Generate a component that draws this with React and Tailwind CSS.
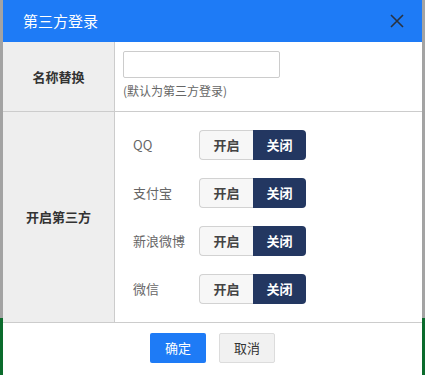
import React, { useState } from "react";

const platforms = ["QQ", "支付宝", "新浪微博", "微信"];

const Strip = () => (
  <div className="w-[3px] flex flex-col">
    <div className="h-[318px] bg-[#a3a3a3]" />
    <div className="flex-1 bg-[#0b6b2c]" />
  </div>
);

const Toggle = ({ on, onChange }) => (
  <div className="flex h-[30px] w-[107px] text-[13px] font-bold">
    <button
      onClick={() => onChange(true)}
      className={
        on
          ? "w-[54px] rounded-l-[4px] bg-[#233761] text-white"
          : "w-[54px] rounded-l-[4px] border border-r-0 border-[#d2d2d2] bg-[#f7f7f7] text-[#444]"
      }
    >
      开启
    </button>
    <button
      onClick={() => onChange(false)}
      className={
        on
          ? "w-[53px] rounded-r-[4px] border border-l-0 border-[#d2d2d2] bg-[#f7f7f7] text-[#444]"
          : "w-[53px] rounded-r-[4px] bg-[#233761] text-white"
      }
    >
      关闭
    </button>
  </div>
);

export default function App() {
  const [name, setName] = useState("");
  const [states, setStates] = useState({ QQ: false, 支付宝: false, 新浪微博: false, 微信: false });

  return (
    <div className="flex h-[375px] w-[425px] overflow-hidden font-['Noto_Sans_CJK_SC','Noto_Sans',sans-serif]">
      <Strip />
      <div className="w-[419px] flex flex-col bg-white">
        <div className="h-[42px] bg-[#1e7bf6] flex items-center justify-between pl-[20px] pr-[18px]">
          <span className="text-[15px] text-white">第三方登录</span>
          <svg width="14" height="14" viewBox="0 0 14 14" className="text-[#2a3240]">
            <path d="M1 1L13 13M13 1L1 13" stroke="currentColor" strokeWidth="1.6" />
          </svg>
        </div>

        <div className="flex h-[70px] border-b border-[#cccccc]">
          <div className="w-[112px] bg-[#eeeeee] border-r border-[#cccccc] flex items-center justify-center text-[13px] font-bold text-[#333]">
            名称替换
          </div>
          <div className="flex-1 pl-[8px] pt-[9px]">
            <input
              value={name}
              onChange={(e) => setName(e.target.value)}
              className="block w-[157px] h-[27px] border border-[#cccccc] rounded-[2px] outline-none px-2 text-[13px]"
            />
            <div className="mt-[4px] text-[12px] text-[#666]">(默认为第三方登录)</div>
          </div>
        </div>

        <div className="flex h-[211px] border-b border-[#cccccc]">
          <div className="w-[112px] bg-[#eeeeee] border-r border-[#cccccc] flex items-center justify-center text-[13px] font-bold text-[#333]">
            开启第三方
          </div>
          <div className="flex-1 pl-[18px] pt-[18px] flex flex-col gap-[18px]">
            {platforms.map((p) => (
              <div key={p} className="flex items-center">
                <span className="w-[66px] text-[13px] text-[#666]">{p}</span>
                <Toggle on={states[p]} onChange={(v) => setStates({ ...states, [p]: v })} />
              </div>
            ))}
          </div>
        </div>

        <div className="flex justify-center gap-[13px] pt-[10px]">
          <button className="w-[56px] h-[30px] rounded-[2px] bg-[#1e7bf6] text-white text-[13px]">确定</button>
          <button className="w-[56px] h-[30px] rounded-[2px] bg-[#f1f1f1] border border-[#dcdcdc] text-[#333] text-[13px]">取消</button>
        </div>
      </div>
      <Strip />
    </div>
  );
}
